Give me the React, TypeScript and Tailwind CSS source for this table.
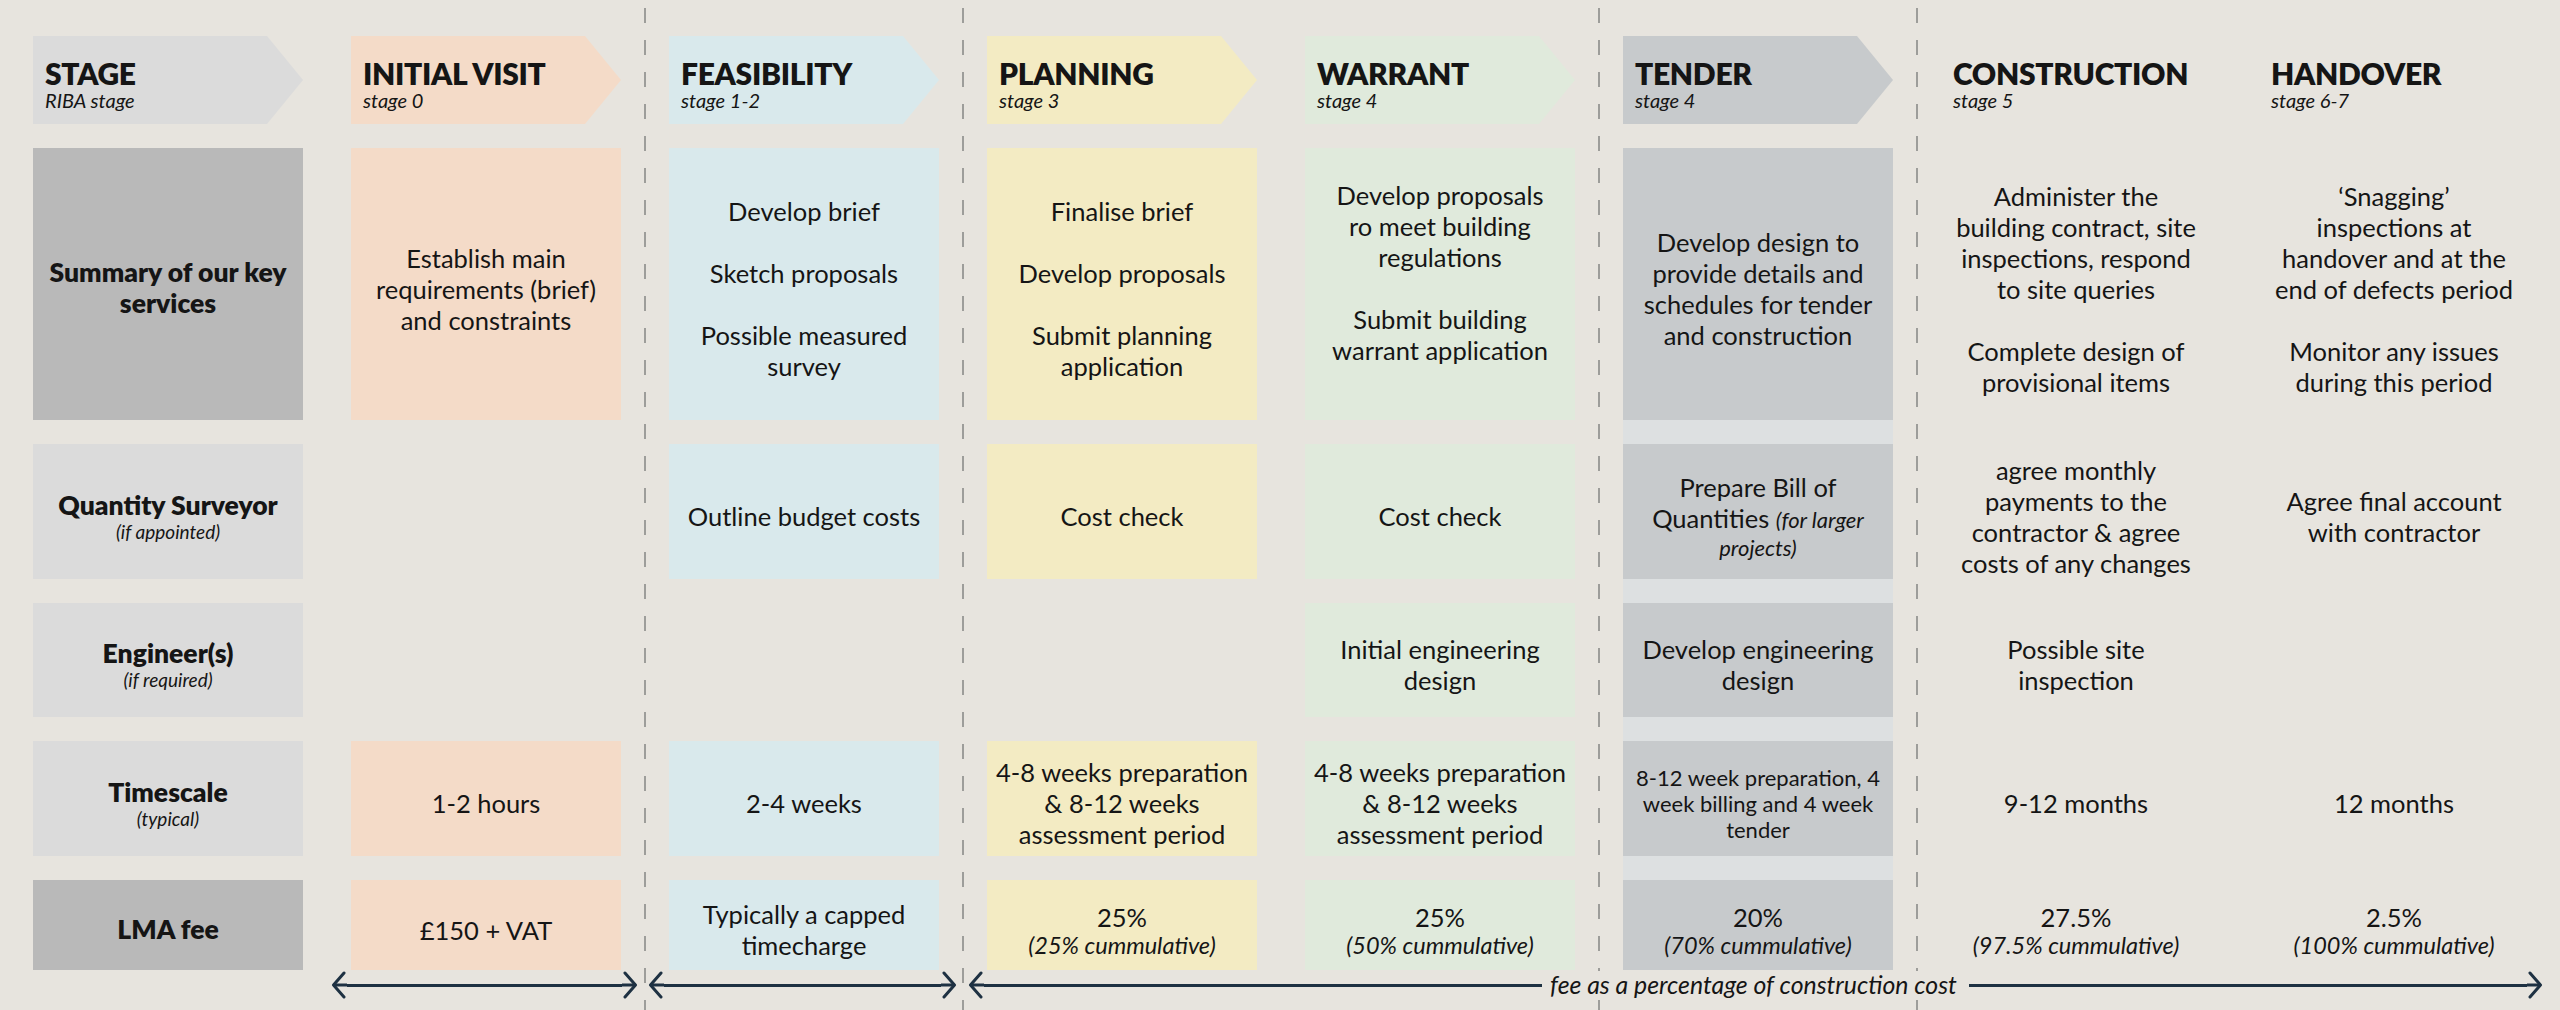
import type { ReactNode } from "react"

// column fills (label column varies by row, construction + handover have none)
const PEACH = "bg-[#f4dbc8]"
const BLUE = "bg-[#d9e9ec]"
const YELLOW = "bg-[#f3ebc3]"
const GREEN = "bg-[#e0eadc]"
const TENDER = "bg-[#c7cacc]"
const LABEL_LIGHT = "bg-[#dbdbdb]"
const LABEL_DARK = "bg-[#b9b9b9]"

const ARROW_CLIP =
  "[clip-path:polygon(0_0,calc(100%_-_36px)_0,100%_50%,calc(100%_-_36px)_100%,0_100%)]"

function Stage({
  pos,
  fill,
  title,
  sub,
  arrow = true,
}: {
  pos: string
  fill?: string
  title: string
  sub: string
  arrow?: boolean
}) {
  return (
    <div
      className={`${pos} row-start-2 flex flex-col justify-center pl-3 pt-2 ${fill ?? ""} ${arrow ? ARROW_CLIP : ""}`}
    >
      <span className="text-[30px] font-extrabold leading-[32px] tracking-[-0.01em]">
        {title}
      </span>
      <span className="text-[20px] italic leading-[22px]">{sub}</span>
    </div>
  )
}

function Label({
  pos,
  fill,
  title,
  sub,
}: {
  pos: string
  fill: string
  title: ReactNode
  sub?: string
}) {
  return (
    <div
      className={`${pos} col-start-1 flex flex-col items-center justify-center pt-[8px] text-center ${fill}`}
    >
      <span className="text-[26.5px] font-extrabold leading-[31px]">{title}</span>
      {sub && <span className="text-[19px] italic leading-[21px]">{sub}</span>}
    </div>
  )
}

function Cell({
  pos,
  fill,
  children,
  size = "text-[25.5px] leading-[31px]",
  pad = "pt-[10px]",
}: {
  pos: string
  fill?: string
  children: ReactNode
  size?: string
  pad?: string
}) {
  return (
    <div
      className={`${pos} flex flex-col items-center justify-center whitespace-nowrap text-center ${size} ${pad} ${fill ?? ""}`}
    >
      {children}
    </div>
  )
}

function Fee({ pos, fill, pct, total }: { pos: string; fill?: string; pct: string; total: string }) {
  return (
    <Cell pos={pos} fill={fill} pad="pt-[12px]">
      <span className="leading-[29px]">{pct}</span>
      <span className="text-[23.5px] italic leading-[27px]">{total}</span>
    </Cell>
  )
}

function Head({ dir }: { dir: "left" | "right" }) {
  return (
    <svg width="16" height="28" viewBox="0 0 16 28" className="shrink-0">
      {dir === "left" ? (
        <>
          <polyline points="13,2 2.5,14 13,26" fill="none" stroke="#1e3142" strokeWidth="3" strokeLinecap="round" strokeLinejoin="round" />
          <line x1="2" y1="14" x2="16" y2="14" stroke="#1e3142" strokeWidth="3" />
        </>
      ) : (
        <>
          <polyline points="3,2 13.5,14 3,26" fill="none" stroke="#1e3142" strokeWidth="3" strokeLinecap="round" strokeLinejoin="round" />
          <line x1="0" y1="14" x2="14" y2="14" stroke="#1e3142" strokeWidth="3" />
        </>
      )}
    </svg>
  )
}

function Arrow({ className, label }: { className: string; label?: string }) {
  return (
    <div className={`flex shrink-0 items-center ${className}`}>
      <Head dir="left" />
      <div className="h-[3px] flex-1 bg-[#1e3142]" />
      {label && (
        <>
          <span className="bg-[#e7e4de] pl-[8px] pr-[12px] text-[24.8px] italic leading-[28px]">
            {label}
          </span>
          <div className="h-[3px] flex-1 bg-[#1e3142]" />
        </>
      )}
      <Head dir="right" />
    </div>
  )
}

const DASH =
  "row-span-full justify-self-center w-[1.5px] bg-[repeating-linear-gradient(to_bottom,transparent_0px,transparent_8px,#9d9d9a_8px,#9d9d9a_23px,transparent_23px,transparent_32px)]"

export default function App() {
  return (
    <div className="h-[1010px] w-[2560px] overflow-hidden bg-[#e7e4de] font-[Lato,'Liberation_Sans',sans-serif] text-[#151515]">
      <div className="grid h-full grid-cols-[270px_48px_270px_48px_270px_48px_270px_48px_270px_48px_270px_48px_270px_48px_270px] grid-rows-[36px_88px_24px_272px_24px_135px_24px_114px_24px_115px_24px_90px_30px_10px] px-[33px]">
        {/* ================= DIVIDERS ================= */}
        <div className={`col-start-4 ${DASH}`} />
        <div className={`col-start-6 ${DASH}`} />
        <div className={`col-start-10 ${DASH}`} />
        <div className={`col-start-12 ${DASH}`} />

        {/* tender column strip behind the boxes */}
        <div className="col-start-11 row-start-4 row-end-13 bg-[#dde0e1]" />

        {/* ================= STAGES ================= */}
        <Stage pos="col-start-1" fill={LABEL_LIGHT} title="STAGE" sub="RIBA stage" />
        <Stage pos="col-start-3" fill={PEACH} title="INITIAL VISIT" sub="stage 0" />
        <Stage pos="col-start-5" fill={BLUE} title="FEASIBILITY" sub="stage 1-2" />
        <Stage pos="col-start-7" fill={YELLOW} title="PLANNING" sub="stage 3" />
        <Stage pos="col-start-9" fill={GREEN} title="WARRANT" sub="stage 4" />
        <Stage pos="col-start-11" fill={TENDER} title="TENDER" sub="stage 4" />
        <Stage pos="col-start-13" title="CONSTRUCTION" sub="stage 5" arrow={false} />
        <Stage pos="col-start-15" title="HANDOVER" sub="stage 6-7" arrow={false} />

        {/* ================= KEY SERVICES ================= */}
        <Label
          pos="row-start-4"
          fill={LABEL_DARK}
          title={
            <>
              Summary of our key
              <br />
              services
            </>
          }
        />
        <Cell pos="col-start-3 row-start-4" fill={PEACH}>
          Establish main
          <br />
          requirements (brief)
          <br />
          and constraints
        </Cell>
        <Cell pos="col-start-5 row-start-4 gap-[31px]" fill={BLUE}>
          <p>Develop brief</p>
          <p>Sketch proposals</p>
          <p>
            Possible measured
            <br />
            survey
          </p>
        </Cell>
        <Cell pos="col-start-7 row-start-4 gap-[31px]" fill={YELLOW}>
          <p>Finalise brief</p>
          <p>Develop proposals</p>
          <p>
            Submit planning
            <br />
            application
          </p>
        </Cell>
        <Cell pos="col-start-9 row-start-4 gap-[31px]" fill={GREEN} pad="pb-[22px]">
          <p>
            Develop proposals
            <br />
            ro meet building
            <br />
            regulations
          </p>
          <p>
            Submit building
            <br />
            warrant application
          </p>
        </Cell>
        <Cell pos="col-start-11 row-start-4" fill={TENDER}>
          Develop design to
          <br />
          provide details and
          <br />
          schedules for tender
          <br />
          and construction
        </Cell>
        <Cell pos="col-start-13 row-start-4 gap-[31px]">
          <p>
            Administer the
            <br />
            building contract, site
            <br />
            inspections, respond
            <br />
            to site queries
          </p>
          <p>
            Complete design of
            <br />
            provisional items
          </p>
        </Cell>
        <Cell pos="col-start-15 row-start-4 gap-[31px]">
          <p>
            ‘Snagging’
            <br />
            inspections at
            <br />
            handover and at the
            <br />
            end of defects period
          </p>
          <p>
            Monitor any issues
            <br />
            during this period
          </p>
        </Cell>

        {/* ================= QUANTITY SURVEYOR ================= */}
        <Label pos="row-start-6" fill={LABEL_LIGHT} title="Quantity Surveyor" sub="(if appointed)" />
        <Cell pos="col-start-5 row-start-6" fill={BLUE}>
          Outline budget costs
        </Cell>
        <Cell pos="col-start-7 row-start-6" fill={YELLOW}>
          Cost check
        </Cell>
        <Cell pos="col-start-9 row-start-6" fill={GREEN}>
          Cost check
        </Cell>
        <Cell pos="col-start-11 row-start-6" fill={TENDER}>
          <span>Prepare Bill of</span>
          <span>
            Quantities <i className="text-[22px]">(for larger</i>
          </span>
          <i className="text-[22px] leading-[26px]">projects)</i>
        </Cell>
        <Cell pos="col-start-13 row-start-6">
          agree monthly
          <br />
          payments to the
          <br />
          contractor &amp; agree
          <br />
          costs of any changes
        </Cell>
        <Cell pos="col-start-15 row-start-6">
          Agree final account
          <br />
          with contractor
        </Cell>

        {/* ================= ENGINEER ================= */}
        <Label pos="row-start-8" fill={LABEL_LIGHT} title="Engineer(s)" sub="(if required)" />
        <Cell pos="col-start-9 row-start-8" fill={GREEN}>
          Initial engineering
          <br />
          design
        </Cell>
        <Cell pos="col-start-11 row-start-8" fill={TENDER}>
          Develop engineering
          <br />
          design
        </Cell>
        <Cell pos="col-start-13 row-start-8">
          Possible site
          <br />
          inspection
        </Cell>

        {/* ================= TIMESCALE ================= */}
        <Label pos="row-start-10" fill={LABEL_LIGHT} title="Timescale" sub="(typical)" />
        <Cell pos="col-start-3 row-start-10" fill={PEACH}>
          1-2 hours
        </Cell>
        <Cell pos="col-start-5 row-start-10" fill={BLUE}>
          2-4 weeks
        </Cell>
        <Cell pos="col-start-7 row-start-10" fill={YELLOW}>
          4-8 weeks preparation
          <br />
          &amp; 8-12 weeks
          <br />
          assessment period
        </Cell>
        <Cell pos="col-start-9 row-start-10" fill={GREEN}>
          4-8 weeks preparation
          <br />
          &amp; 8-12 weeks
          <br />
          assessment period
        </Cell>
        <Cell pos="col-start-11 row-start-10" fill={TENDER} size="text-[22px] leading-[26px]">
          8-12 week preparation, 4
          <br />
          week billing and 4 week
          <br />
          tender
        </Cell>
        <Cell pos="col-start-13 row-start-10">9-12 months</Cell>
        <Cell pos="col-start-15 row-start-10">12 months</Cell>

        {/* ================= FEE ================= */}
        <Label pos="row-start-12" fill={LABEL_DARK} title="LMA fee" />
        <Cell pos="col-start-3 row-start-12" fill={PEACH}>
          £150 + VAT
        </Cell>
        <Cell pos="col-start-5 row-start-12" fill={BLUE}>
          Typically a capped
          <br />
          timecharge
        </Cell>
        <Fee pos="col-start-7 row-start-12" fill={YELLOW} pct="25%" total="(25% cummulative)" />
        <Fee pos="col-start-9 row-start-12" fill={GREEN} pct="25%" total="(50% cummulative)" />
        <Fee pos="col-start-11 row-start-12" fill={TENDER} pct="20%" total="(70% cummulative)" />
        <Fee pos="col-start-13 row-start-12" pct="27.5%" total="(97.5% cummulative)" />
        <Fee pos="col-start-15 row-start-12" pct="2.5%" total="(100% cummulative)" />

        {/* ================= ARROWS ================= */}
        <div className="col-span-full col-start-1 row-start-13 flex items-center">
          <Arrow className="ml-[298px] w-[307px]" />
          <Arrow className="ml-[10px] w-[309px]" />
          <Arrow className="ml-[11px] w-[1575px]" label="fee as a percentage of construction cost" />
        </div>
      </div>
    </div>
  )
}
